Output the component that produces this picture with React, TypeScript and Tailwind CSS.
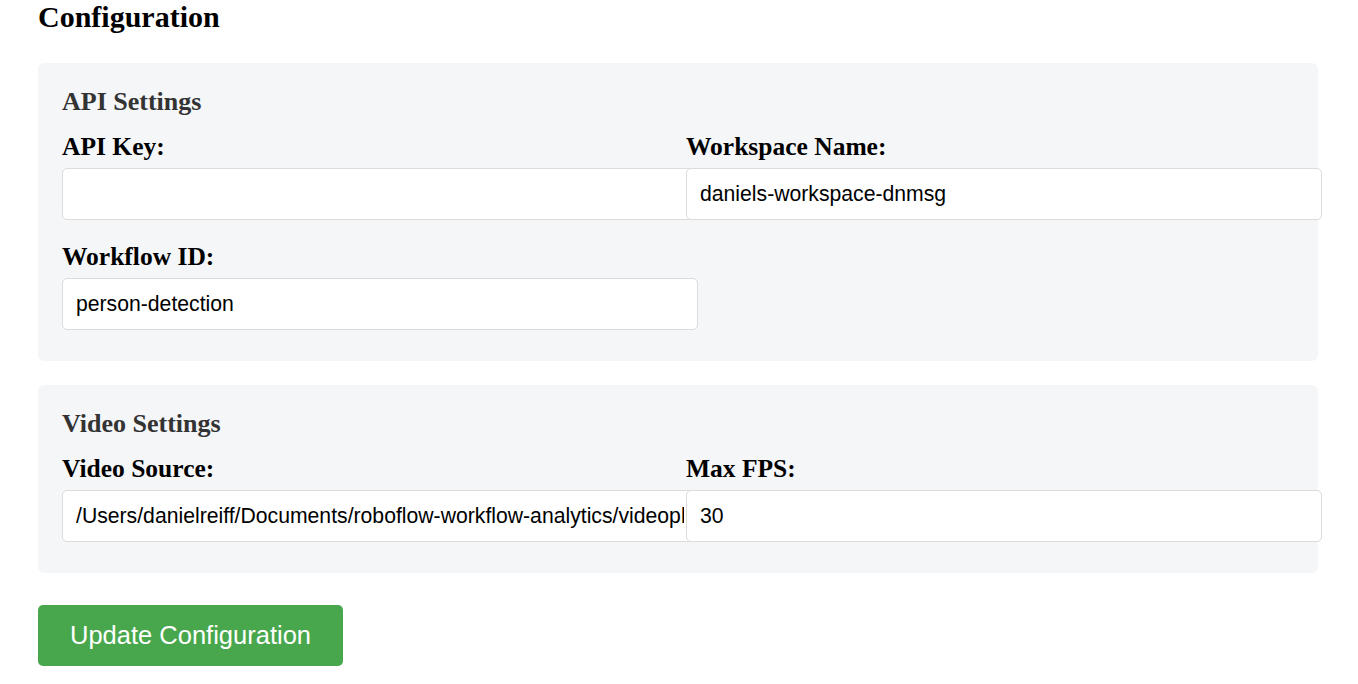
const serif = "font-['Liberation_Serif','Times_New_Roman',serif]";
const sans = "font-['Liberation_Sans',Arial,sans-serif]";

function Field({ label, value }: { label: string; value: string }) {
  return (
    <div className="mb-[22px]">
      <label className={`${serif} block text-[25.5px] font-bold leading-[29px] text-black mb-[7px]`}>
        {label}
      </label>
      <input
        type="text"
        defaultValue={value}
        className={`${sans} box-content block w-full h-[24px] px-[13px] py-[13px] text-[21.2px] leading-[24px] text-black bg-white border border-[#dcdcdc] rounded-[5px] outline-none`}
      />
    </div>
  );
}

function Panel({ title, children }: { title: string; children: React.ReactNode }) {
  return (
    <section className="bg-[#f5f6f8] rounded-[6px] pt-[23px] px-[24px] pb-[9px]">
      <h3 className={`${serif} text-[26px] font-bold leading-[31px] text-[#333] mb-[15px]`}>{title}</h3>
      <div className="grid grid-cols-2 gap-x-4">{children}</div>
    </section>
  );
}

export default function App() {
  return (
    <div className="min-h-screen bg-white pl-[38px]">
      <div className="w-[1280px]">
        <h2 className={`${serif} text-[30px] font-bold leading-[34px] text-black mb-[29px]`}>
          Configuration
        </h2>

        <Panel title="API Settings">
          <Field label="API Key:" value="" />
          <Field label="Workspace Name:" value="daniels-workspace-dnmsg" />
          <Field label="Workflow ID:" value="person-detection" />
        </Panel>

        <div className="h-[24px]" />

        <Panel title="Video Settings">
          <Field
            label="Video Source:"
            value="/Users/danielreiff/Documents/roboflow-workflow-analytics/videoplayback.mp4"
          />
          <Field label="Max FPS:" value="30" />
        </Panel>

        <button
          className={`${sans} mt-[32px] h-[61px] px-[32px] rounded-[5px] bg-[#48a74c] text-white text-[25.5px] leading-[29px]`}
        >
          Update Configuration
        </button>
      </div>
    </div>
  );
}
